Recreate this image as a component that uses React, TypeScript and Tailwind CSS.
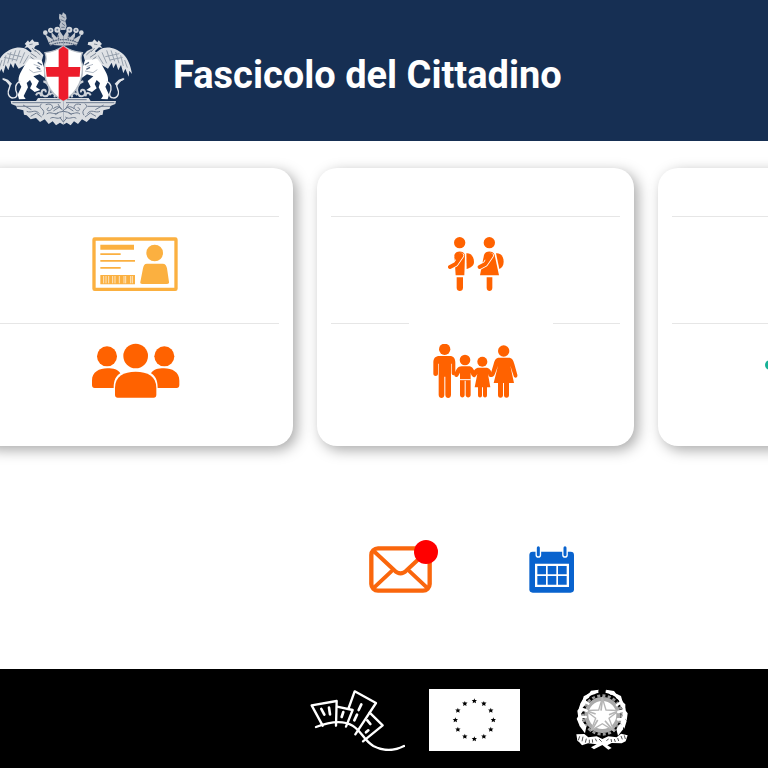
import React from "react";

type IconProps = { className?: string };

function GriffinHalf() {
  return (
    <g>
      {/* wing */}
      <path
        d="M126 156 C108 168 94 160 82 150 C62 136 32 143 10 163 C-4 176 -12 198 -16 222 L-8 212 L-6 230 L4 206 L10 220 L17 195 L25 211 L32 190 L40 205 L45 188 L56 206 L76 194 L88 181 Z"
        fill="#dfe2e6"
      />
      <path
        d="M6 180 L-2 203 M18 166 L10 198 M33 156 L23 190 M47 151 L36 184 M60 151 L49 184 M74 157 L60 190 M86 166 L70 192 M22 161 L64 170 M12 172 L50 180"
        stroke="#96a0ad"
        strokeWidth="3"
        fill="none"
      />
      {/* head and neck */}
      <path
        d="M74 132 L84 121 L88 127 L97 118 L103 125 L115 126 L117 134 L107 137 L102 145 L119 153 L130 165 L126 180 L92 183 L85 170 L95 153 L83 142 L73 144 L79 136 Z"
        fill="#dde0e4"
      />
      <path
        d="M88 134 L98 132 M96 144 L107 156 M92 160 L110 172 M105 150 L121 165 M91 170 L104 180"
        stroke="#7d8998"
        strokeWidth="3"
        fill="none"
      />
      {/* body and legs */}
      <path
        d="M76 192 C64 214 54 226 56 245 L64 260 L53 284 L57 298 L77 297 L71 288 L84 262 L80 249 L90 240 L96 252 L90 265 L104 276 L121 270 L108 261 L117 243 L100 229 L119 223 L134 233 L132 202 L125 180 L88 177 Z"
        fill="#fff"
      />
      <path
        d="M88 209 L101 218 L125 213 M101 193 L120 200"
        stroke="#b4bcc7"
        strokeWidth="3"
        fill="none"
      />
      <path d="M110 202 L121 208 M113 187 L126 195" stroke="#53647d" strokeWidth="4" />
      {/* tail */}
      <path
        d="M60 244 C45 250 44 265 51 281 C52 297 30 299 25 282 C21 268 34 263 29 250 C24 240 16 244 9 237"
        fill="none"
        stroke="#e8eaee"
        strokeWidth="4"
        strokeLinecap="round"
      />
      <path d="M8 233 L24 239 L36 251 L30 259 L20 247 Z" fill="#dfe3e8" />
      {/* scrolls beside the shield */}
      <path
        d="M130 244 C147 249 153 268 146 282 C140 294 123 289 125 276 C127 266 139 267 137 277 M108 286 C112 275 124 278 123 289 M148 285 C158 275 168 282 163 292"
        fill="none"
        stroke="#cdd2d9"
        strokeWidth="6"
      />
      {/* base */}
      <path
        d="M32 303 L108 303 L114 294 L190 294 L190 374 L180 368 L168 376 L158 364 L146 372 L134 358 L120 366 L108 354 L92 358 L80 346 L72 344 L70 331 L51 326 L49 318 L34 312 Z"
        fill="#dadde1"
      />
      <path
        d="M37 308 H182 M50 319 H118 M120 299 H180 M69 315 L94 329 M80 334 C94 341 106 325 118 341 M125 311 C108 325 142 326 128 346 M137 314 C155 307 165 322 151 331 C141 336 137 325 147 323 M140 342 C153 332 161 347 174 338 M151 355 C163 347 171 361 184 351 M174 312 L184 328 M92 349 L109 339 L125 351 M160 333 L177 322"
        fill="none"
        stroke="#6f7c90"
        strokeWidth="3"
      />
      {/* crown */}
      <path d="M149 134 L135 103 L156 116 L154 96 L171 113 L178 91 L190 109 L190 137 Z" fill="#c3c8cf" />
      <path
        d="M146 129 Q168 118 190 119 M156 112 L161 123 M174 106 L176 117 M150 137 Q170 127 190 128"
        fill="none"
        stroke="#56657d"
        strokeWidth="4"
        strokeDasharray="5 2"
      />
      <circle cx="136" cy="98" r="7" fill="#d3d7dc" />
      <circle cx="152" cy="91" r="8" fill="#d3d7dc" />
      <circle cx="172" cy="89" r="9" fill="#d3d7dc" />
      <circle cx="152" cy="91" r="3" fill="#71809a" />
      <circle cx="172" cy="89" r="3" fill="#71809a" />
    </g>
  );
}

function Crest({ className }: IconProps) {
  return (
    <svg className={className} viewBox="0 36 399 351" role="img" aria-label="Stemma del Comune">
      <GriffinHalf />
      <g transform="translate(380 0) scale(-1 1)">
        <GriffinHalf />
      </g>
      <path
        d="M178 41 L186 45 L189 37 L198 44 L200 56 L196 63 L200 78 L196 90 L182 90 L178 76 L182 65 L177 55 Z"
        fill="#b9c0c9"
      />
      <path
        d="M184 48 L194 54 M182 59 L194 64 M186 70 L195 77 M184 82 H194"
        stroke="#69778c"
        strokeWidth="3"
        fill="none"
      />
      <path
        d="M135 158 Q166 155 190 138 Q214 155 247 158 Q239 174 247 193 C250 232 236 277 190 303 C143 277 130 232 134 193 Q142 175 135 158 Z"
        fill="#fff"
        stroke="#b9bfc7"
        strokeWidth="4"
      />
      <path
        d="M176 149 L190 139 L205 149 V201 H241 L239 230 H205 V295 L190 302 L176 295 V230 H140 L137 201 H176 Z"
        fill="#ed1c2b"
      />
      <path
        d="M160 326 C174 314 181 323 190 332 C199 323 208 314 222 326 M166 344 Q190 324 215 344 M180 353 L190 366 L201 353"
        stroke="#69778c"
        strokeWidth="3"
        fill="none"
      />
    </svg>
  );
}

function IdCardIcon({ className }: IconProps) {
  return (
    <svg className={className} viewBox="37 36 258 165" fill="#fbb040" aria-hidden="true">
      <rect x="43" y="42" width="246" height="151" rx="2" fill="none" stroke="#fbb040" strokeWidth="10" />
      <path d="M62 59h101v15H62zM62 85h61v5H62zM62 105h104v5H62zM62 126h61v5H62z" />
      <path d="M62 150h104v28H62z" />
      <path
        d="M72 153v22M79 153v22M87 153v22M99 153v22M106 153v22M119 153v22M133 153v22M138 153v22M153 153v22M158 153v22"
        stroke="#fff"
        strokeWidth="2"
      />
      <circle cx="225" cy="84" r="25" />
      <path d="M202 116h47c8 0 11 6 13 14l6 41c1 4-2 6-6 6h-74c-5 0-7-2-6-6l8-41c2-9 4-14 12-14z" />
    </svg>
  );
}

function PeopleIcon({ className }: IconProps) {
  return (
    <svg className={className} viewBox="33 27 264 165" fill="#ff6200" aria-hidden="true">
      <circle cx="81" cy="64" r="30" />
      <circle cx="253" cy="64" r="30" />
      <path d="M36 150v-13c0-26 22-37 46-37 18 0 33 4 39 15-13 8-20 20-20 44H44c-5 0-8-3-8-9zM298 150v-13c0-26-22-37-46-37-18 0-33 4-39 15 13 8 20 20 20 44h57c5 0 8-3 8-9z" />
      <circle cx="167" cy="63" r="37" />
      <path d="M105 180v-21c0-35 26-49 62-49s62 14 62 49v21c0 5-3 8-8 8H113c-5 0-8-3-8-8z" />
    </svg>
  );
}

function StudentsIcon({ className }: IconProps) {
  return (
    <svg className={className} viewBox="54 36 168 165" fill="#ff6200" aria-hidden="true">
      <circle cx="89" cy="53" r="17" />
      <path d="M109 85c15-2 23 12 23 26 0 11-9 17-22 21z" />
      <path d="M73 90c4-14 28-14 32 0l-2 61H77z" />
      <path d="M80 157h19v31c0 13-19 13-19 0z" />
      <path d="M60 126l17-9 17-25" fill="none" stroke="#fff" strokeWidth="17" strokeLinecap="round" strokeLinejoin="round" />
      <path d="M60 126l17-9 17-25" fill="none" stroke="#ff6200" strokeWidth="12" strokeLinecap="round" strokeLinejoin="round" />
      <path d="M74 98c2-12 16-18 26-12l-6 12-14 13z" />
      <circle cx="178" cy="53" r="17" />
      <path d="M198 85c14-2 23 10 23 25 0 12-6 18-13 22z" />
      <path d="M162 90c4-14 28-14 32 0l13 61h-57z" />
      <path d="M170 157h17v31c0 13-17 13-17 0z" />
      <path d="M149 126l17-9 17-25" fill="none" stroke="#fff" strokeWidth="17" strokeLinecap="round" strokeLinejoin="round" />
      <path d="M149 126l17-9 17-25" fill="none" stroke="#ff6200" strokeWidth="12" strokeLinecap="round" strokeLinejoin="round" />
      <path d="M163 98c2-12 16-18 26-12l-6 12-14 13z" />
    </svg>
  );
}

function FamilyIcon({ className }: IconProps) {
  return (
    <svg className={className} viewBox="10 357 258 165" fill="#ff6200" aria-hidden="true">
      <circle cx="45" cy="373" r="17" />
      <path d="M29 393h31c12 0 17 8 17 20v31c0 9-11 9-11 0v-28h-2v93c0 13-17 13-17 0v-54h-3v54c0 13-17 13-17 0v-93h-2v30c0 9-14 9-14 0v-33c0-14 7-20 18-20z" />
      <circle cx="106" cy="405" r="16" />
      <path d="M96 424h21c11 0 14 7 20 20 2 10-8 13-12 6l-2-7v67c0 10-15 10-15 0v-43h-3v43c0 10-14 10-14 0v-67l-5 9c-4 8-14 3-12-4 5-14 10-24 22-24z" />
      <path d="M91 464h32" stroke="#fff" strokeWidth="3" />
      <circle cx="158" cy="410" r="15" />
      <path d="M148 428h20c12 0 15 7 20 18 3 10-6 14-11 6l-2-5 7 40h-10v24c0 9-12 9-12 0v-24h-3v24c0 9-12 9-12 0v-24h-10l8-40-4 6c-5 8-14 2-11-6 5-12 9-19 20-19z" />
      <circle cx="222" cy="378" r="17" />
      <path d="M209 398h27c12 0 15 8 18 19l9 32c2 10-9 12-11 4l-10-31 11 52h-15v37c0 10-15 10-15 0v-37h-3v37c0 10-15 10-15 0v-37h-13l13-52-9 24c-5 14-17 12-13 1l9-30c3-11 6-19 17-19z" />
    </svg>
  );
}

function NetworkIcon({ className }: IconProps) {
  return (
    <svg className={className} viewBox="0 0 104 55" fill="#17b196" aria-hidden="true">
      <circle cx="5" cy="21" r="5" />
      <circle cx="99" cy="21" r="5" />
      <circle cx="52" cy="8" r="8" />
      <circle cx="52" cy="45" r="8" />
    </svg>
  );
}

function MailIcon({ className }: IconProps) {
  return (
    <svg
      className={className}
      viewBox="27 48 189 141"
      fill="none"
      stroke="#fa660c"
      strokeWidth="13"
      strokeLinecap="round"
      strokeLinejoin="round"
      aria-hidden="true"
    >
      <rect x="34" y="55" width="175" height="127" rx="20" />
      <path d="M41 63L103 121c12 12 25 12 37 0l62-58M42 173l52-49M201 173l-52-49" strokeWidth="12" />
    </svg>
  );
}

function CalendarIcon({ className }: IconProps) {
  return (
    <svg className={className} viewBox="507 48 135 141" aria-hidden="true">
      <rect x="508" y="65" width="134" height="123" rx="10" fill="#0963ce" />
      <path d="M535 53v22M615 53v22" stroke="#fff" strokeWidth="17" strokeLinecap="round" />
      <path d="M535 53v21M615 53v21" stroke="#0963ce" strokeWidth="9" strokeLinecap="round" />
      <path d="M525 101h102v70H525z" fill="#fff" />
      <path d="M532 108h26v25h-26zM563 108h26v25h-26zM594 108h26v25h-26zM532 138h26v26h-26zM563 138h26v26h-26zM594 138h26v26h-26z" fill="#0963ce" />
    </svg>
  );
}

function VillageLogo({ className }: IconProps) {
  return (
    <svg
      className={className}
      viewBox="27 27 288 186"
      fill="none"
      stroke="#fff"
      strokeWidth="7"
      strokeLinecap="round"
      strokeLinejoin="round"
      role="img"
      aria-label="Comuni in rete"
    >
      <path d="M48 141C92 124 132 122 158 137C185 153 190 180 220 198C249 213 283 213 312 198" />
      <path d="M68 137L35 76L110 63L108 137" />
      <path d="M111 80L158 90L138 140M146 84L164 34L228 69L166 163" />
      <path d="M209 98L248 136L189 184" />
      <path d="M64 87l9 17M87 83l3 20M130 96l-5 15M184 73l-8 17M171 104l-8 17M202 121l9 11M205 151l-7 6" strokeWidth="8" />
    </svg>
  );
}

const STAR = "M0-8L2-3H8L4 1L5 7L0 4L-5 7L-4 1L-8-3H-2Z";
const STAR_ANGLES = [0, 30, 60, 90, 120, 150, 180, 210, 240, 270, 300, 330];

function EuropeFlag({ className }: IconProps) {
  return (
    <svg className={className} viewBox="0 0 273 186" role="img" aria-label="Unione Europea">
      <path d="M0 0h273v186H0z" fill="#fff" />
      {STAR_ANGLES.map((a) => (
        <path
          key={a}
          d={STAR}
          fill="#000"
          transform={`translate(${136 + 57 * Math.sin((a * Math.PI) / 180)} ${93 - 57 * Math.cos((a * Math.PI) / 180)})`}
        />
      ))}
    </svg>
  );
}

function RepublicEmblem({ className }: IconProps) {
  return (
    <svg className={className} viewBox="465 27 156 186" role="img" aria-label="Repubblica Italiana">
      <circle cx="544" cy="105" r="58" fill="none" stroke="#999" strokeWidth="8" strokeDasharray="9 7" />
      <circle cx="544" cy="105" r="48" fill="#fff" stroke="#aaa" strokeWidth="12" />
      <path d="M544 54L555 90L594 92L564 115L578 152L544 131L510 152L524 115L494 92L533 90Z" fill="#fff" stroke="#b5b5b5" strokeWidth="4" />
      <path d="M544 60L540 92M594 92L564 104M576 151L552 122M512 151L530 120M496 92L524 102" stroke="#b5b5b5" strokeWidth="5" fill="none" />
      {/* olive and oak branches */}
      <path d="M532 34C483 42 464 91 484 137M554 34C606 43 623 93 601 145" fill="none" stroke="#fff" strokeWidth="8" />
      <path
        d="M534 29l-24 3-9 13 20-2zM511 37l-23 12-4 17 20-13zM496 52l-17 19 1 19 14-18zM484 72l-15 20 3 22 14-21zM479 96l-12 20 9 22 9-20zM482 120l-7 17 17 23 4-20zM555 29l24 4 10 13-21-2zM580 38l20 10 5 19-20-13zM595 58l18 15 0 22-15-18zM606 82l14 18-3 22-13-18zM603 107l14 16-7 23-11-17zM598 130l9 17-16 20-5-19z"
        fill="#fff"
      />
      <path d="M492 65l10 6M485 88l12 4M482 111l12 0M599 68l-11 7M604 92l-12 4M603 118l-12 0" stroke="#fff" strokeWidth="8" strokeLinecap="round" />
      {/* ribbon */}
      <path
        d="M466 163L490 162L502 172L527 169L544 177L562 169L587 172L600 161L620 166L614 184L602 190L572 189L559 196L572 204L562 209L544 195L519 208L510 202L527 193L501 190L483 196L475 187L469 182Z"
        fill="#fff"
      />
      <path
        d="M476 169l-4 12M486 170l-3 14M496 176l-3 12M505 179l0 10M514 178l1 10M523 176l4 8M534 177l8 8M556 182l7-5M570 177l2 9M580 177l3 9M590 174l3 9M600 168l4 10M610 166l3 11"
        stroke="#555"
        strokeWidth="3"
      />
    </svg>
  );
}

type Service = {
  label: string;
  href: string;
  icon: React.ReactNode;
  splitLine?: boolean;
};

const CARDS: Service[][] = [
  [
    { label: "I miei dati", href: "#dati", icon: <IdCardIcon className="h-[55px] w-[86px]" /> },
    { label: "Il mio nucleo", href: "#nucleo", icon: <PeopleIcon className="h-[55px] w-[88px] overflow-visible" /> },
  ],
  [
    { label: "Scuola", href: "#scuola", icon: <StudentsIcon className="h-[55px] w-14" /> },
    { label: "Famiglia", href: "#famiglia", icon: <FamilyIcon className="h-[55px] w-[86px]" />, splitLine: true },
  ],
  [
    { label: "Casa", href: "#casa", icon: <span className="block h-[55px]" /> },
    { label: "Rete", href: "#rete", icon: <NetworkIcon className="h-[55px] w-[104px]" /> },
  ],
];

function ServiceRow({ label, href, icon, splitLine }: Service) {
  return (
    <li>
      <div className={splitLine ? "flex justify-between" : "flex"} aria-hidden="true">
        <span className={splitLine ? "h-px w-[78px] bg-[#e6e6e6]" : "h-px flex-1 bg-[#e6e6e6]"} />
        {splitLine && <span className="h-px w-[67px] bg-[#e6e6e6]" />}
      </div>
      <a href={href} aria-label={label} className="flex justify-center pt-5 pb-[31px]">
        {icon}
      </a>
    </li>
  );
}

export default function App() {
  return (
    <div className="flex min-h-screen flex-col overflow-x-hidden bg-white font-['Roboto',sans-serif]">
      <header className="flex items-center gap-10 bg-[#162f53] py-3">
        <Crest className="h-[117px] w-[133px] shrink-0" />
        <h1 className="pt-2 text-[38px] leading-10 font-bold whitespace-nowrap text-white">Fascicolo del Cittadino</h1>
      </header>

      <main>
        <div className="overflow-hidden pt-[27px] pb-6">
          <div className="-ml-6 flex gap-6">
            {CARDS.map((rows, i) => (
              <ul
                key={i}
                className="w-[317px] shrink-0 rounded-[20px] bg-white px-3.5 pt-12 pb-4 shadow-[4px_4px_14px_rgba(0,0,0,0.34)]"
              >
                {rows.map((row) => (
                  <ServiceRow key={row.label} {...row} />
                ))}
              </ul>
            ))}
          </div>
        </div>

        <div className="flex justify-center gap-[97px] pt-[76px] pb-[76px] pl-[175px]">
          <button type="button" aria-label="Messaggi" className="relative">
            <MailIcon className="h-[47px] w-[63px]" />
            <span className="absolute -top-1.5 -right-1.5 size-6 rounded-full bg-[#ff0000]" />
          </button>
          <button type="button" aria-label="Calendario">
            <CalendarIcon className="h-[47px] w-[45px]" />
          </button>
        </div>
      </main>

      <footer className="flex flex-1 items-start justify-center gap-6 bg-black pt-5 pb-4 pl-[168px]">
        <VillageLogo className="h-[62px] w-24" />
        <EuropeFlag className="h-[62px] w-[91px]" />
        <RepublicEmblem className="ml-8 h-[62px] w-[52px]" />
      </footer>
    </div>
  );
}
